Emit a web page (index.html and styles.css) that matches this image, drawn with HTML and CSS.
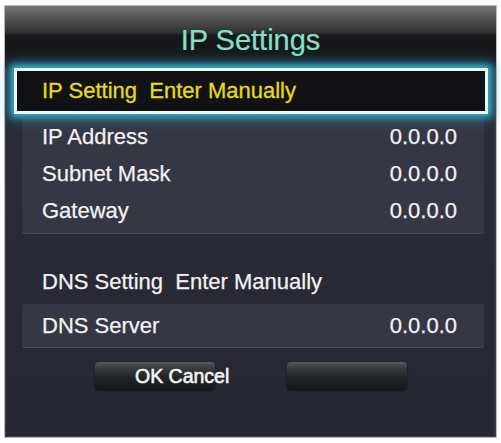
FILE: index.html
```html
<!DOCTYPE html>
<html>
<head>
<meta charset="utf-8">
<link rel="stylesheet" href="styles.css">
</head>
<body>
<div class="panel">
  <div class="header"><span class="title">IP Settings</span></div>
  <div class="selected"><span>IP Setting&nbsp;&nbsp;Enter Manually</span></div>
  <div class="group">
    <div class="row"><span>IP Address</span><span>0.0.0.0</span></div>
    <div class="row"><span>Subnet Mask</span><span>0.0.0.0</span></div>
    <div class="row"><span>Gateway</span><span>0.0.0.0</span></div>
  </div>
  <div class="row plain"><span>DNS Setting&nbsp;&nbsp;Enter Manually</span></div>
  <div class="group dns">
    <div class="row"><span>DNS Server</span><span>0.0.0.0</span></div>
  </div>
  <div class="buttons">
    <div class="btn first"><span>OK Cancel</span></div>
    <div class="btn"></div>
  </div>
</div>
</body>
</html>
```
FILE: styles.css
```css
html, body {
  margin: 0;
  padding: 0;
  background: #ffffff;
}
body {
  font-family: "Liberation Sans", Arial, sans-serif;
  color: #f2f2f2;
}
.panel {
  box-sizing: border-box;
  margin: 5px 0 0 4px;
  width: 493px;
  height: 433px;
  background: linear-gradient(#2c2d39, #262732);
  border: 1px solid #b8b8bc;
  box-shadow: inset 0 0 0 1px #3c3d47, inset -3px 0 0 #2f303b;
  display: flex;
  flex-direction: column;
}
.header {
  height: 62px;
  padding-top: 6px;
  box-sizing: border-box;
  display: flex;
  align-items: center;
  justify-content: center;
  background: linear-gradient(#767676 0, #505050 14px, #2f2f2f 27px, #18181b 29px, #17171a 48px, #1d2a33 62px);
}
.title {
  font-size: 29px;
  color: #86e0c8;
  line-height: 1;
  -webkit-text-stroke: 0.2px #86e0c8;
}
.selected {
  box-sizing: border-box;
  margin: 0 8px 0 9px;
  height: 46px;
  border: 3px solid #e6fbff;
  background: #121215;
  box-shadow: 0 0 7px 3px #3ab8d6, 0 0 14px 5px rgba(40, 150, 190, 0.45);
  display: flex;
  align-items: center;
  padding-left: 25px;
  font-size: 22px;
  color: #e6da1c;
  -webkit-text-stroke: 0.3px #e6da1c;
  position: relative;
  z-index: 1;
}
.group {
  margin: 3px 12px 0 17px;
  height: 116px;
  box-sizing: border-box;
  padding-top: 1px;
  background: #363744;
  border-radius: 3px;
  box-shadow: 0 1px 0 #484959, 0 -1px 0 #2a2b35;
}
.row {
  height: 37px;
  display: flex;
  align-items: center;
  justify-content: space-between;
  padding: 0 27px 0 20px;
  font-size: 22px;
  color: #f2f2f2;
  -webkit-text-stroke: 0.25px #f2f2f2;
}
.plain {
  margin: 30px 12px 0 17px;
}
.dns {
  margin-top: 4px;
  height: 43px;
  padding-top: 3px;
}
.buttons {
  margin-top: 15px;
  display: flex;
  justify-content: center;
  gap: 72px;
  padding-left: 1px;
}
.btn {
  width: 120px;
  height: 28px;
  border-radius: 4px;
  background: linear-gradient(#5c5d62 0, #3a3b3e 6px, #222325 16px, #161718 100%);
  box-shadow: 0 1px 2px rgba(0, 0, 0, 0.5);
  display: flex;
  align-items: center;
  white-space: nowrap;
}
.first {
  padding-left: 40px;
  box-sizing: border-box;
  font-size: 19.5px;
  color: #f4f4f4;
  -webkit-text-stroke: 0.6px #f4f4f4;
}
```
